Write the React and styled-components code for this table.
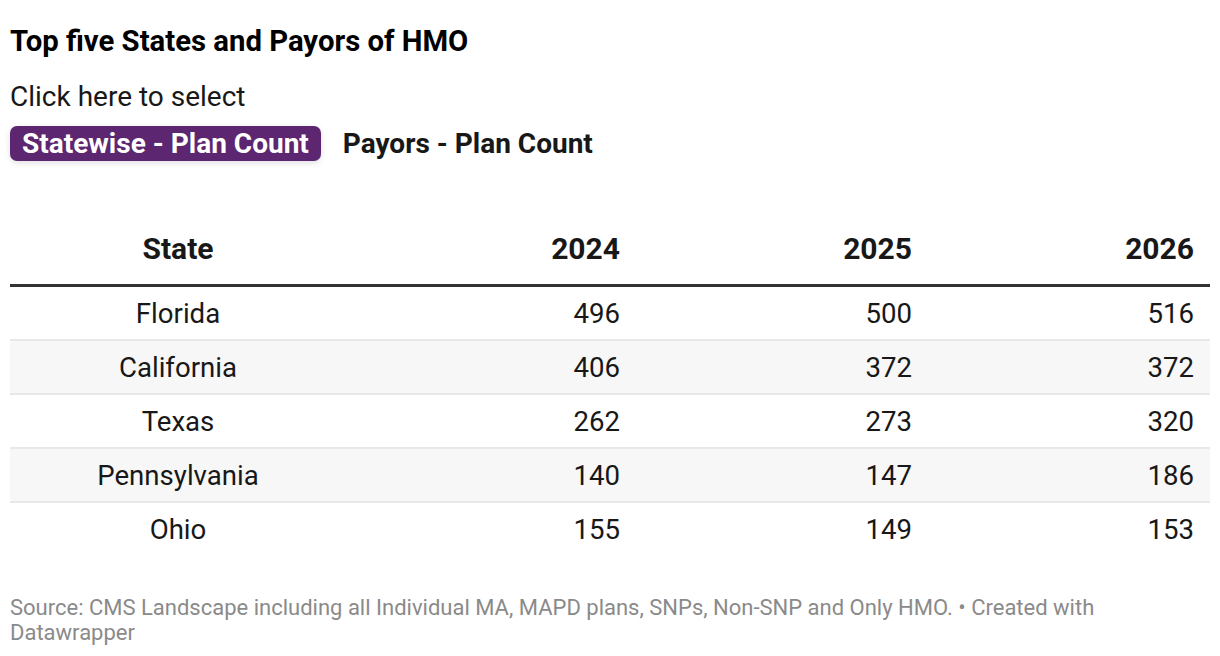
import React from 'react'
import styled, { createGlobalStyle } from 'styled-components'

const GlobalStyle = createGlobalStyle`
  body {
    margin: 0;
    background: #fff;
    font-family: Roboto, "Liberation Sans", sans-serif;
    color: #181818;
  }
`

const ChartWrapper = styled.div`
  width: 1220px;
  height: 656px;
  padding: 24px 10px 0 10px;
  box-sizing: border-box;
`

const Title = styled.h1`
  margin: 0;
  font-size: 29.3px;
  font-weight: 700;
  line-height: 34px;
  color: #000;
`

const Description = styled.p`
  margin: 22px 0 0;
  font-size: 28px;
  line-height: 34px;
  color: #181818;
`

const ButtonRow = styled.div`
  display: flex;
  align-items: center;
  gap: 22px;
  margin-top: 12px;
`

const ToggleButton = styled.button`
  font-family: Roboto, "Liberation Sans", sans-serif;
  font-size: 28px;
  font-weight: 700;
  line-height: 35px;
  padding: ${p => (p.active ? '0 12px' : '0')};
  border: none;
  border-radius: 7px;
  color: ${p => (p.active ? '#fff' : '#181818')};
  background: ${p => (p.active ? '#5c2670' : 'transparent')};
  box-shadow: ${p => (p.active ? '0 2px 6px rgba(0,0,0,0.12)' : 'none')};
  cursor: pointer;
`

const Table = styled.table`
  width: 1200px;
  margin-top: 51px;
  border-collapse: collapse;
  font-size: 27.6px;
`

const HeadCell = styled.th`
  font-size: 30px;
  font-weight: 700;
  text-align: ${p => p.align || 'right'};
  padding: ${p => (p.align === 'center' ? '0' : '0 16px 0 0')};
  height: 72px;
  vertical-align: middle;
  border-bottom: 3px solid #333;
  color: #181818;
`

const Row = styled.tr`
  background: ${p => (p.shaded ? '#f7f7f7' : '#fff')};
  border-bottom: 2px solid #e8e8e8;
  &:last-child {
    border-bottom: none;
  }
`

const Cell = styled.td`
  text-align: ${p => p.align || 'right'};
  padding: ${p => (p.align === 'center' ? '0' : '0 16px 0 0')};
  height: 52px;
  vertical-align: middle;
`

const Footer = styled.div`
  max-width: 1100px;
  margin-top: 40px;
  font-size: 22px;
  line-height: 25px;
  color: #8a8a8a;
`

const rows = [
  ['Florida', 496, 500, 516],
  ['California', 406, 372, 372],
  ['Texas', 262, 273, 320],
  ['Pennsylvania', 140, 147, 186],
  ['Ohio', 155, 149, 153],
]

function App() {
  return (
    <ChartWrapper>
      <GlobalStyle />
      <Title>Top five States and Payors of HMO</Title>
      <Description>Click here to select</Description>
      <ButtonRow>
        <ToggleButton active>Statewise - Plan Count</ToggleButton>
        <ToggleButton>Payors - Plan Count</ToggleButton>
      </ButtonRow>

      <Table>
        <colgroup>
          <col style={{ width: 336 }} />
          <col style={{ width: 290 }} />
          <col style={{ width: 292 }} />
          <col />
        </colgroup>
        <thead>
          <tr>
            <HeadCell align="center">State</HeadCell>
            <HeadCell>2024</HeadCell>
            <HeadCell>2025</HeadCell>
            <HeadCell>2026</HeadCell>
          </tr>
        </thead>
        <tbody>
          {rows.map((r, i) => (
            <Row key={r[0]} shaded={i % 2 === 1}>
              <Cell align="center">{r[0]}</Cell>
              <Cell>{r[1]}</Cell>
              <Cell>{r[2]}</Cell>
              <Cell>{r[3]}</Cell>
            </Row>
          ))}
        </tbody>
      </Table>

      <Footer>
        Source: CMS Landscape including all Individual MA, MAPD plans, SNPs, Non-SNP and Only HMO. • Created with Datawrapper
      </Footer>
    </ChartWrapper>
  )
}

export default App
